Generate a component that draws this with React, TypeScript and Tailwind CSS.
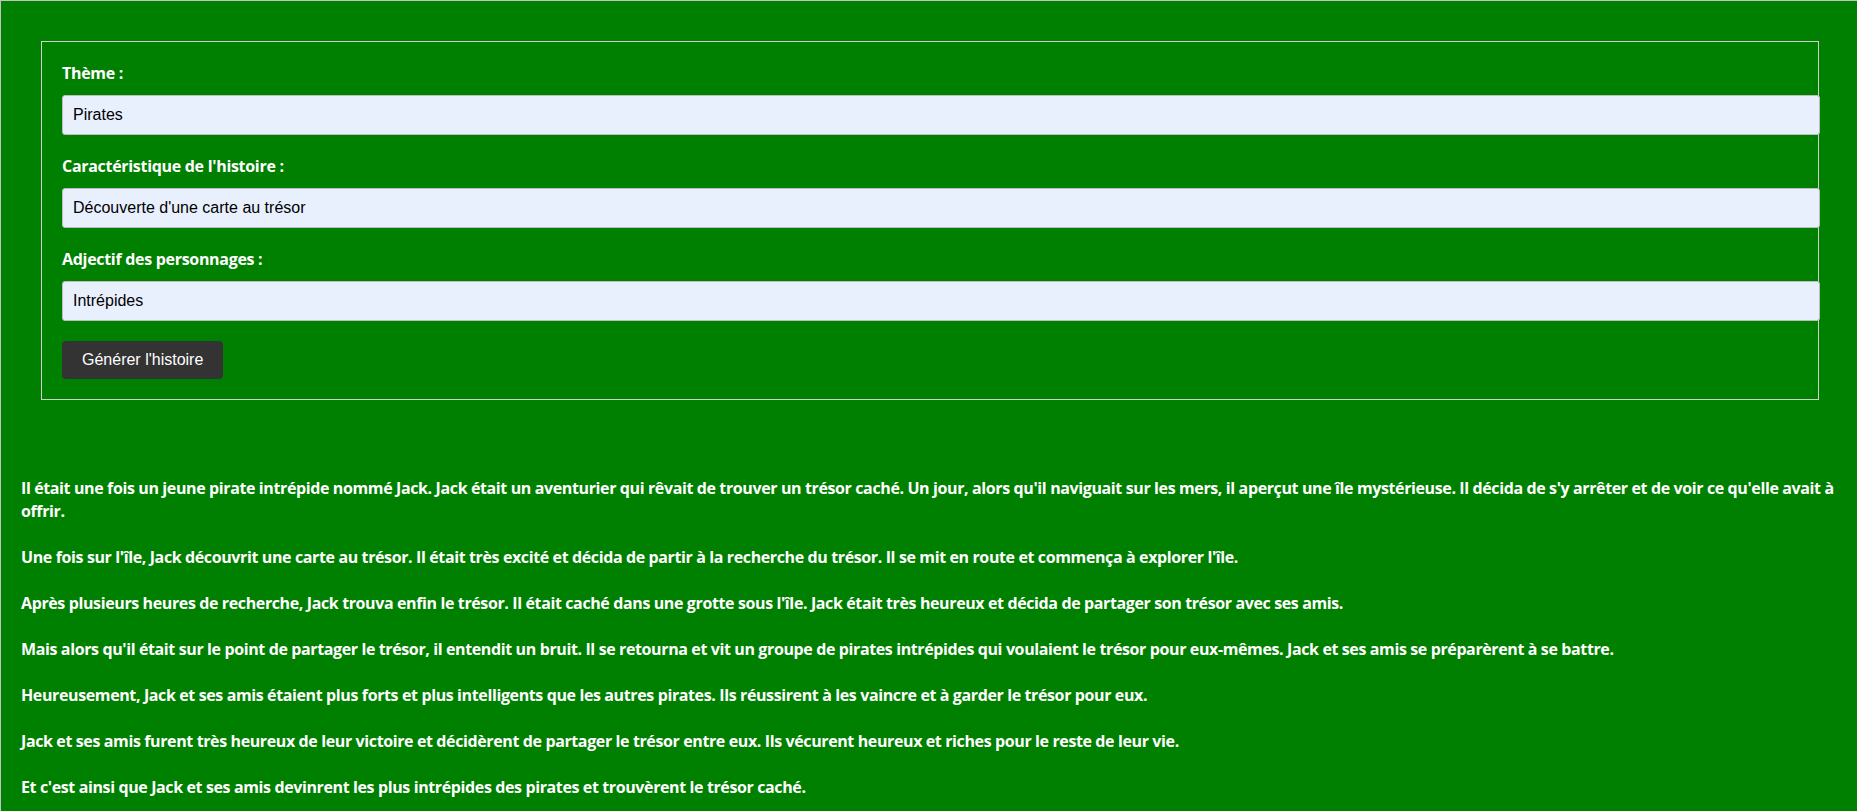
import React from "react";

const comic = { fontFamily: '"Comic Sans MS", "Open Sans", sans-serif' };

const paragraphs: string[][] = [
  [
    "Il était une fois un jeune pirate intrépide nommé Jack. Jack était un aventurier qui rêvait de trouver un trésor caché. Un jour, alors qu'il naviguait sur les mers, il aperçut une île mystérieuse. Il décida de s'y arrêter et de voir ce qu'elle avait à",
    "offrir.",
  ],
  [
    "Une fois sur l'île, Jack découvrit une carte au trésor. Il était très excité et décida de partir à la recherche du trésor. Il se mit en route et commença à explorer l'île.",
  ],
  [
    "Après plusieurs heures de recherche, Jack trouva enfin le trésor. Il était caché dans une grotte sous l'île. Jack était très heureux et décida de partager son trésor avec ses amis.",
  ],
  [
    "Mais alors qu'il était sur le point de partager le trésor, il entendit un bruit. Il se retourna et vit un groupe de pirates intrépides qui voulaient le trésor pour eux-mêmes. Jack et ses amis se préparèrent à se battre.",
  ],
  [
    "Heureusement, Jack et ses amis étaient plus forts et plus intelligents que les autres pirates. Ils réussirent à les vaincre et à garder le trésor pour eux.",
  ],
  [
    "Jack et ses amis furent très heureux de leur victoire et décidèrent de partager le trésor entre eux. Ils vécurent heureux et riches pour le reste de leur vie.",
  ],
  [
    "Et c'est ainsi que Jack et ses amis devinrent les plus intrépides des pirates et trouvèrent le trésor caché.",
  ],
];

function Field({ label, value, first }: { label: string; value: string; first?: boolean }) {
  return (
    <div className={first ? "" : "mt-[20px]"}>
      <label
        className="block h-[22px] leading-[22px] mb-[11px] text-white font-bold text-[16px] tracking-[-0.3px] whitespace-nowrap"
        style={comic}
      >
        {label}
      </label>
      <input
        readOnly
        value={value}
        className="block w-[calc(100%+22px)] h-[40px] px-[10px] bg-[#e8f0fe] border border-[#bdbdbd] rounded-[3px] text-[16px] text-black outline-none"
        style={{ fontFamily: '"Liberation Sans", Arial, sans-serif' }}
      />
    </div>
  );
}

export default function App() {
  return (
    <div className="min-h-screen bg-[#008000] border-t border-l border-[#c3c3c3]">
      <form className="ml-[40px] mr-[38px] mt-[40px] border border-[#cfcfcf] p-[20px]">
        <Field first label="Thème :" value="Pirates" />
        <Field label="Caractéristique de l'histoire :" value="Découverte d'une carte au trésor" />
        <Field label="Adjectif des personnages :" value="Intrépides" />
        <button
          type="button"
          className="mt-[20px] h-[38px] px-[20px] bg-[#333333] text-white text-[16px] rounded-[4px]"
          style={{ fontFamily: '"Liberation Sans", Arial, sans-serif' }}
        >
          Générer l'histoire
        </button>
      </form>
      <div
        className="mt-[77px] pl-[20px] text-white font-bold text-[16px] leading-[23px] tracking-[-0.38px]"
        style={comic}
      >
        {paragraphs.map((p, i) => (
          <div key={i} className={i === 0 ? "" : "mt-[23px]"}>
            {p.map((line, j) => (
              <div key={j} className="whitespace-nowrap">
                {line}
              </div>
            ))}
          </div>
        ))}
      </div>
    </div>
  );
}
